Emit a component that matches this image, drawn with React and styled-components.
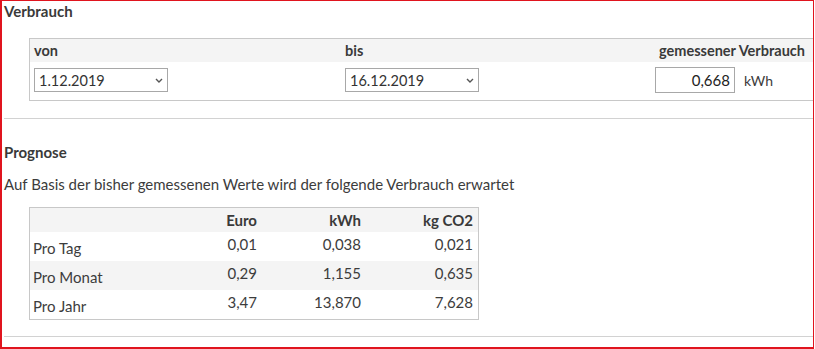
import React from 'react'
import styled, { createGlobalStyle } from 'styled-components'

const GlobalStyle = createGlobalStyle`
  body {
    margin: 0;
    background: #fff;
    font-family: Lato, "Open Sans", sans-serif;
    color: #3c3c3c;
  }
`

const Frame = styled.div`
  width: 811px;
  height: 346px;
  border: 1px solid #e0141e;
  border-left-width: 2px;
  border-bottom-width: 2px;
  overflow: hidden;
`

const Section = styled.section`
  margin-left: 2px;
  padding-bottom: ${(p) => p.$bottom || 0}px;
  border-bottom: 1px solid #d2d2d2;
`

const Heading = styled.h2`
  margin: 0;
  padding-top: ${(p) => p.$top || 0}px;
  font-size: 15px;
  font-weight: 700;
  line-height: 18px;
  color: #3a3a3a;
`

const Text = styled.p`
  margin: 14px 0 0;
  font-size: 15px;
  line-height: 18px;
`

const Box = styled.div`
  margin: ${(p) => p.$top}px 0 0 25px;
  width: ${(p) => p.$width}px;
  border: 1px solid #c8c8c8;
  border-right: ${(p) => (p.$open ? 'none' : '1px solid #c8c8c8')};
`

const FilterHead = styled.div`
  display: grid;
  grid-template-columns: 311px 1fr auto;
  height: 23px;
  align-items: center;
  padding: 0 9px 0 4px;
  background: #f4f4f4;
  font-size: 14.5px;
  font-weight: 700;
  color: #3a3a3a;
`

const FilterRow = styled.div`
  display: grid;
  grid-template-columns: 311px 1fr auto;
  align-items: center;
  padding: 5px 0 7px 4px;
  height: 26px;
`

const SelectWrap = styled.div`
  position: relative;
  width: 134px;
  height: 24px;
`

const Select = styled.select`
  appearance: none;
  width: 100%;
  height: 100%;
  border: 1px solid #a8a8a8;
  border-radius: 0;
  background: #fff;
  padding: 0 0 0 4px;
  font-family: Lato, "Open Sans", sans-serif;
  font-size: 14.5px;
  color: #333;
`

const Chevron = styled.svg`
  position: absolute;
  right: 5px;
  top: 10px;
  pointer-events: none;
`

const Amount = styled.div`
  display: flex;
  align-items: center;
  gap: 9px;
  padding-right: 41px;
  font-size: 14px;
`

const NumberInput = styled.input`
  width: 80px;
  height: 26px;
  box-sizing: border-box;
  border: 1px solid #a8a8a8;
  text-align: right;
  padding: 0 4px;
  font-family: Lato, "Open Sans", sans-serif;
  font-size: 15px;
  color: #222;
`

const Table = styled.table`
  border-collapse: collapse;
  table-layout: fixed;
  width: 100%;
  font-size: 15px;
`

const Th = styled.th`
  box-sizing: border-box;
  background: #f4f4f4;
  height: 24px;
  padding: 0 ${(p) => p.$pad || 0}px 0 0;
  text-align: right;
  font-weight: 700;
  color: #3a3a3a;
  width: ${(p) => p.$w}px;
`

const Tr = styled.tr`
  background: ${(p) => (p.$alt ? '#f4f4f4' : '#fff')};
`

const Td = styled.td`
  height: 29px;
  box-sizing: border-box;
  padding: ${(p) => (p.$label ? '3px 0 0 3px' : `0 ${p.$pad || 0}px 5px 0`)};
  text-align: ${(p) => (p.$label ? 'left' : 'right')};
  vertical-align: middle;
  color: #3c3c3c;
`

const DateSelect = ({ value }) => (
  <SelectWrap>
    <Select defaultValue={value}>
      <option>{value}</option>
    </Select>
    <Chevron width="8" height="5" viewBox="0 0 8 5">
      <path d="M1 1l3 3 3-3" fill="none" stroke="#555" strokeWidth="1.4" />
    </Chevron>
  </SelectWrap>
)

const rows = [
  ['Pro Tag', '0,01', '0,038', '0,021'],
  ['Pro Monat', '0,29', '1,155', '0,635'],
  ['Pro Jahr', '3,47', '13,870', '7,628'],
]

export default function App() {
  return (
    <>
      <GlobalStyle />
      <Frame>
        <Section $bottom={17}>
          <Heading $top={1}>Verbrauch</Heading>
          <Box $top={18} $width={784} $open>
            <FilterHead>
              <span>von</span>
              <span>bis</span>
              <span>gemessener Verbrauch</span>
            </FilterHead>
            <FilterRow>
              <DateSelect value="1.12.2019" />
              <DateSelect value="16.12.2019" />
              <Amount>
                <NumberInput defaultValue="0,668" />
                <span>kWh</span>
              </Amount>
            </FilterRow>
          </Box>
        </Section>
        <Section $bottom={16}>
          <Heading $top={24}>Prognose</Heading>
          <Text>Auf Basis der bisher gemessenen Werte wird der folgende Verbrauch erwartet</Text>
          <Box $top={14} $width={448}>
            <Table>
              <thead>
                <tr>
                  <Th $w={160} />
                  <Th $w={68} $pad={1}>Euro</Th>
                  <Th $w={104} $pad={1}>kWh</Th>
                  <Th $w={116} $pad={5}>kg CO2</Th>
                </tr>
              </thead>
              <tbody>
                {rows.map((r, i) => (
                  <Tr key={r[0]} $alt={i === 1}>
                    <Td $label>{r[0]}</Td>
                    <Td $pad={1}>{r[1]}</Td>
                    <Td $pad={1}>{r[2]}</Td>
                    <Td $pad={5}>{r[3]}</Td>
                  </Tr>
                ))}
              </tbody>
            </Table>
          </Box>
        </Section>
      </Frame>
    </>
  )
}
